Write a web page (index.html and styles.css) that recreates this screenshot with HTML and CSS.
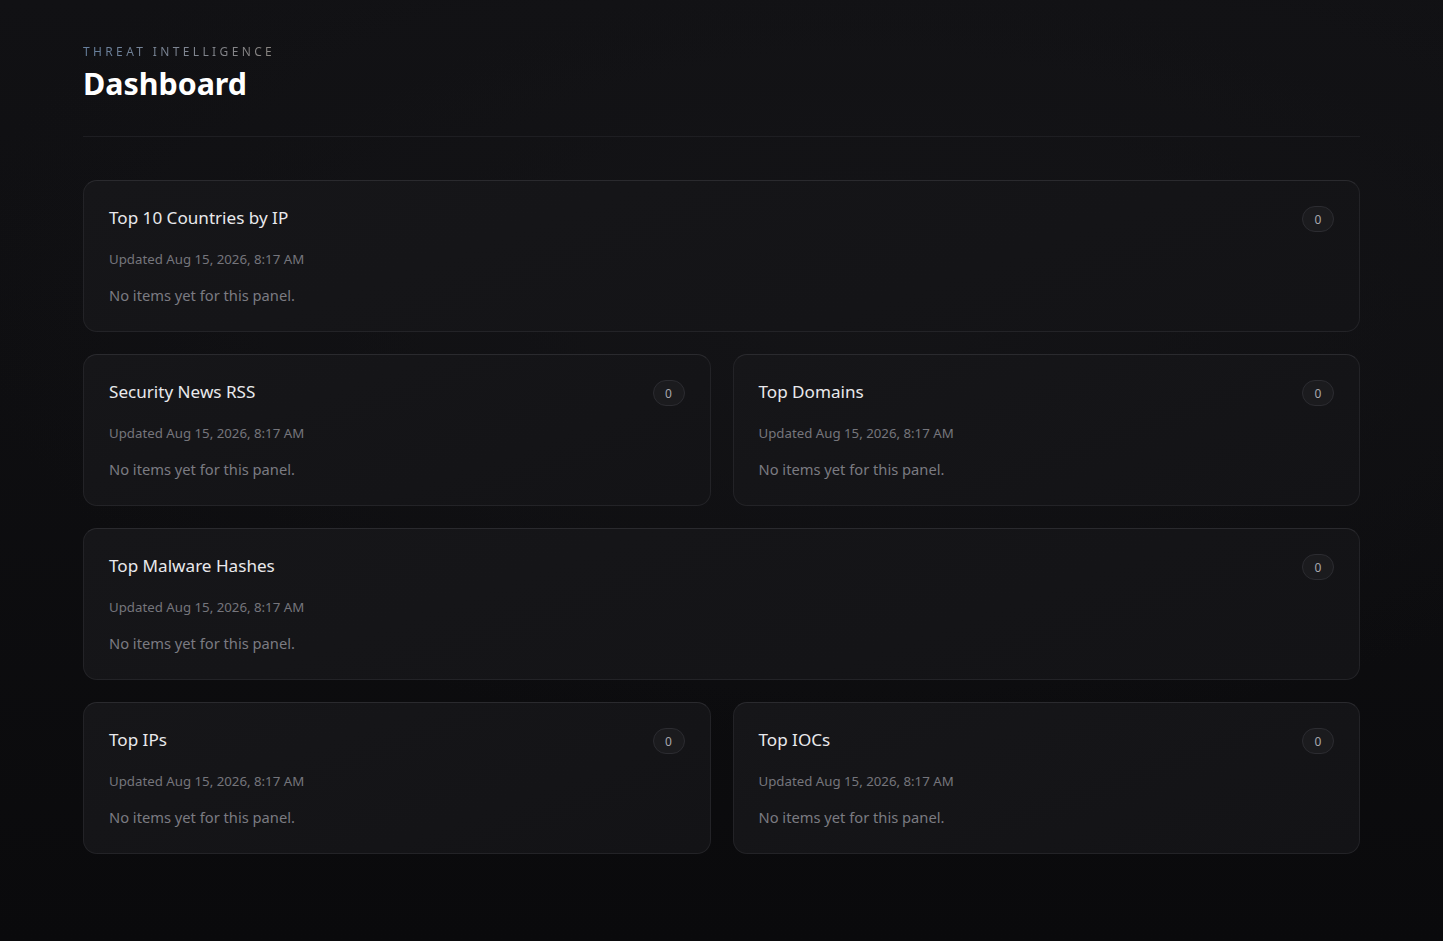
FILE: index.html
```html
<!DOCTYPE html>
<html lang="en">
  <head>
    <meta charset="UTF-8" />
    <meta name="viewport" content="width=device-width, initial-scale=1.0" />
    <title>Threat Intelligence Dashboard</title>
    <link rel="stylesheet" href="styles.css">
  </head>
  <body>
    <main class="page">
      <header class="page-header">
        <p class="eyebrow">Threat Intelligence</p>
        <h1>Dashboard</h1>
      </header>

      <section class="panels">
        <div class="panel wide">
          <div class="panel-head">
            <h2>Top 10 Countries by IP</h2>
            <span class="count">0</span>
          </div>
          <p class="updated">Updated Aug 15, 2026, 8:17 AM</p>
          <p class="empty">No items yet for this panel.</p>
        </div>

        <div class="panel">
          <div class="panel-head">
            <h2>Security News RSS</h2>
            <span class="count">0</span>
          </div>
          <p class="updated">Updated Aug 15, 2026, 8:17 AM</p>
          <p class="empty">No items yet for this panel.</p>
        </div>

        <div class="panel">
          <div class="panel-head">
            <h2>Top Domains</h2>
            <span class="count">0</span>
          </div>
          <p class="updated">Updated Aug 15, 2026, 8:17 AM</p>
          <p class="empty">No items yet for this panel.</p>
        </div>

        <div class="panel wide">
          <div class="panel-head">
            <h2>Top Malware Hashes</h2>
            <span class="count">0</span>
          </div>
          <p class="updated">Updated Aug 15, 2026, 8:17 AM</p>
          <p class="empty">No items yet for this panel.</p>
        </div>

        <div class="panel">
          <div class="panel-head">
            <h2>Top IPs</h2>
            <span class="count">0</span>
          </div>
          <p class="updated">Updated Aug 15, 2026, 8:17 AM</p>
          <p class="empty">No items yet for this panel.</p>
        </div>

        <div class="panel">
          <div class="panel-head">
            <h2>Top IOCs</h2>
            <span class="count">0</span>
          </div>
          <p class="updated">Updated Aug 15, 2026, 8:17 AM</p>
          <p class="empty">No items yet for this panel.</p>
        </div>
      </section>
    </main>
  </body>
</html>
```

FILE: styles.css
```css
* {
  box-sizing: border-box;
  margin: 0;
  padding: 0;
}

html,
body {
  min-height: 100%;
}

body {
  font-family: "Noto Sans", "Open Sans", sans-serif;
  color: #f2f2f4;
  background-color: #0b0b0d;
  background-image:
    radial-gradient(ellipse 90% 70% at 60% 30%, #141417 0%, rgba(20, 20, 23, 0) 70%),
    linear-gradient(180deg, #111114 0%, #0a0a0c 100%);
  min-height: 941px;
}

.page {
  padding: 39px 83px 60px;
}

.page-header {
  padding-bottom: 32px;
  border-bottom: 1px solid #1e1e22;
}

.eyebrow {
  display: inline-block;
  font-size: 12px;
  line-height: 16px;
  letter-spacing: 0.28em;
  text-transform: uppercase;
  background: linear-gradient(90deg, #66809f 0%, #7e8592 50%, #8a8581 100%);
  -webkit-background-clip: text;
  background-clip: text;
  color: transparent;
}

.page-header h1 {
  margin-top: 3px;
  font-size: 30.4px;
  line-height: 40px;
  font-weight: 700;
  color: #ffffff;
}

.panels {
  display: grid;
  grid-template-columns: 1fr 1fr;
  gap: 22px;
  margin-top: 43px;
}

.panel {
  height: 152px;
  padding: 23px 25px 0;
  background: linear-gradient(160deg, #161619 0%, #131316 100%);
  border: 1px solid #232327;
  border-top-color: #2a2a2e;
  border-radius: 14px;
}

.panel.wide {
  grid-column: span 2;
}

.panel-head {
  display: flex;
  align-items: center;
  justify-content: space-between;
  height: 28px;
}

.panel-head h2 {
  font-size: 17.1px;
  font-weight: 400;
  line-height: 28px;
  color: #e9e9ec;
}

.count {
  display: inline-flex;
  align-items: center;
  justify-content: center;
  min-width: 32px;
  height: 26px;
  padding: 0 10px;
  margin-top: 2px;
  font-size: 12px;
  color: #a8a8ae;
  background-color: #1b1b1e;
  border: 1px solid #2c2c31;
  border-radius: 13px;
}

.updated {
  margin-top: 18px;
  font-size: 13.25px;
  line-height: 18px;
  color: #75757c;
}

.empty {
  margin-top: 17px;
  font-size: 14.7px;
  line-height: 20px;
  color: #7b7b82;
}
```
